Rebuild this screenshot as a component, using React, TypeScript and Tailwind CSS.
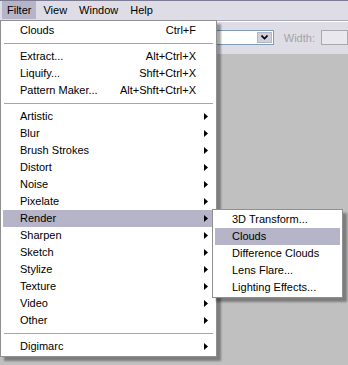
import React from "react";

type Item =
  | { kind: "sep" }
  | { kind: "item"; label: string; shortcut?: string; sub?: boolean; active?: boolean };

const FILTER_MENU: Item[] = [
  { kind: "item", label: "Clouds", shortcut: "Ctrl+F" },
  { kind: "sep" },
  { kind: "item", label: "Extract...", shortcut: "Alt+Ctrl+X" },
  { kind: "item", label: "Liquify...", shortcut: "Shft+Ctrl+X" },
  { kind: "item", label: "Pattern Maker...", shortcut: "Alt+Shft+Ctrl+X" },
  { kind: "sep" },
  { kind: "item", label: "Artistic", sub: true },
  { kind: "item", label: "Blur", sub: true },
  { kind: "item", label: "Brush Strokes", sub: true },
  { kind: "item", label: "Distort", sub: true },
  { kind: "item", label: "Noise", sub: true },
  { kind: "item", label: "Pixelate", sub: true },
  { kind: "item", label: "Render", sub: true, active: true },
  { kind: "item", label: "Sharpen", sub: true },
  { kind: "item", label: "Sketch", sub: true },
  { kind: "item", label: "Stylize", sub: true },
  { kind: "item", label: "Texture", sub: true },
  { kind: "item", label: "Video", sub: true },
  { kind: "item", label: "Other", sub: true },
  { kind: "sep" },
  { kind: "item", label: "Digimarc", sub: true },
];

const RENDER_MENU: Item[] = [
  { kind: "item", label: "3D Transform..." },
  { kind: "item", label: "Clouds", active: true },
  { kind: "item", label: "Difference Clouds" },
  { kind: "item", label: "Lens Flare..." },
  { kind: "item", label: "Lighting Effects..." },
];

function Arrow() {
  return (
    <svg width="4" height="7" viewBox="0 0 4 7" className="shrink-0">
      <polygon points="0,0 4,3.5 0,7" fill="#000" />
    </svg>
  );
}

function MenuList({ items }: { items: Item[] }) {
  return (
    <div className="flex flex-col px-[2px] py-[1px]">
      {items.map((it, i) =>
        it.kind === "sep" ? (
          <div key={i} className="flex h-[9px] items-center px-[1px]">
            <div className="h-px w-full bg-[#a6a6a6]" />
          </div>
        ) : (
          <div
            key={i}
            className={
              "flex h-[17px] items-center justify-between pl-[17px] " +
              (it.sub ? "pr-[6px] " : "pr-[18px] ") +
              (it.active ? "bg-[#b6b4c8]" : "")
            }
          >
            <span className="whitespace-nowrap">{it.label}</span>
            {it.shortcut && <span className="whitespace-nowrap">{it.shortcut}</span>}
            {it.sub && <Arrow />}
          </div>
        )
      )}
    </div>
  );
}

export default function App() {
  return (
    <div
      className="relative h-[365px] w-[348px] overflow-hidden bg-[#c0c0c0] text-[11px] leading-none text-black"
      style={{ fontFamily: '"Liberation Sans", Arial, sans-serif' }}
    >
      {/* menu bar */}
      <div className="flex h-[20px] items-stretch gap-[2px] border-t border-[#7c7b93] bg-[#dedde5] pl-[2px]">
        {["Filter", "View", "Window", "Help"].map((m, i) => (
          <div
            key={m}
            className={"flex items-center px-[5px] " + (i === 0 ? "mb-px bg-[#b6b4c8]" : "")}
          >
            {m}
          </div>
        ))}
      </div>

      {/* options bar */}
      <div className="border-t border-[#a9a8b8]">
        <div className="flex h-[33px] items-start border-t border-white bg-[#dedde5] pl-[150px] pt-[8px]">
          <div className="flex h-[15px] w-[138px] items-stretch justify-end border border-[#7f9db9] bg-white p-px">
            <div className="flex w-[15px] items-center justify-center border border-[#b0b8cc] bg-[#cfcfdc]">
              <svg width="7" height="5" viewBox="0 0 7 5">
                <polyline points="0.5,0.5 3.5,3.5 6.5,0.5" fill="none" stroke="#000" strokeWidth="1.6" />
              </svg>
            </div>
          </div>
          <span className="ml-[10px] mt-[3px] text-[#a3a3a8]">Width:</span>
          <div className="ml-[6px] h-[15px] w-[30px] border border-[#a9a9b0] bg-[#e8e8ee]" />
        </div>
      </div>

      {/* Filter dropdown */}
      <div className="absolute left-0 top-[20px] w-[217px] border border-[#8f8f94] bg-white shadow-[4px_4px_2px_rgba(0,0,0,0.35)]">
        <MenuList items={FILTER_MENU} />
      </div>

      {/* Render submenu */}
      <div className="absolute left-[212px] top-[209px] w-[131px] border border-[#8f8f94] bg-white shadow-[4px_4px_2px_rgba(0,0,0,0.35)]">
        <MenuList items={RENDER_MENU} />
      </div>
    </div>
  );
}
